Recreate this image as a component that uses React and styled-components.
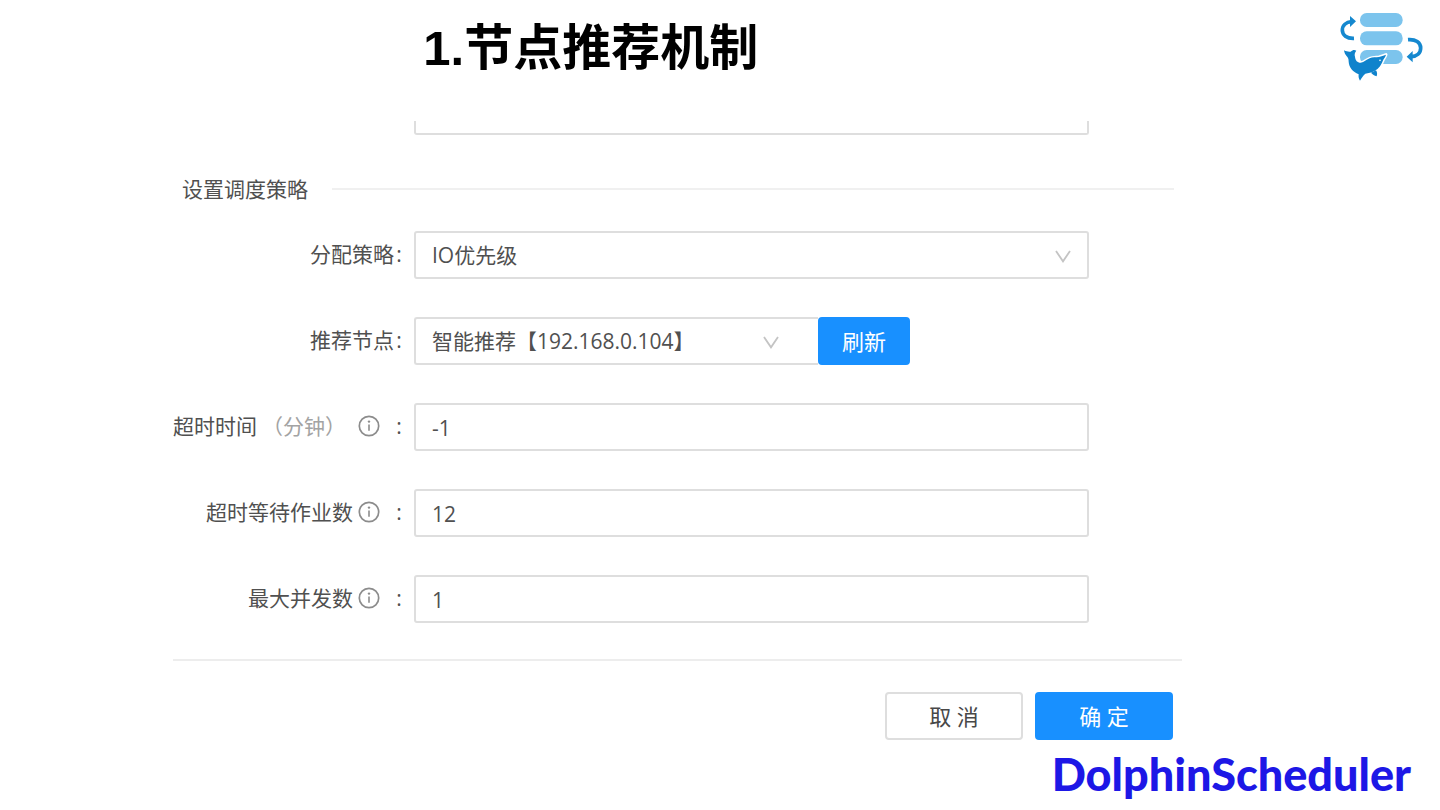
import React from "react";
import styled, { createGlobalStyle } from "styled-components";

const GlobalStyle = createGlobalStyle`
  *, *::before, *::after { box-sizing: border-box; }
  body {
    margin: 0;
    background: #fff;
    color: #505050;
    font-family: "Open Sans", "Noto Sans CJK SC", sans-serif;
    font-size: 21px;
    line-height: 32px;
  }
  button, input, select, textarea { font: inherit; color: inherit; }
`;

const Header = styled.header`
  display: flex;
  align-items: center;
  justify-content: space-between;
  height: 90px;
  padding-left: 29.4%;
`;

const Title = styled.h1`
  margin: 6px 0 0;
  color: #000;
  font-family: "Liberation Sans", "Noto Sans CJK SC", sans-serif;
  font-size: 49px;
  font-weight: 700;
  line-height: 60px;
  white-space: nowrap;
`;

const Logo = styled.svg`
  display: block;
  flex: none;
  width: 120px;
  height: 90px;
`;

const Dialog = styled.form`
  margin: 31px 258px 0 173px;
`;

const Fields = styled.div`
  display: grid;
  row-gap: 38px;
  padding-right: 93px;
`;

const Row = styled.div`
  display: grid;
  grid-template-columns: 241px minmax(0, 1fr);
  align-items: center;
`;

const Label = styled.label`
  display: flex;
  align-items: center;
  justify-content: flex-end;
  gap: 2px;
  padding: 0 12px 2px 0;
  white-space: nowrap;
`;

const Colon = styled.span`
  width: 6px;
  text-align: center;
`;

const Hint = styled.span`
  margin: 0 7px 0 3px;
  color: #a3a3a3;
`;

const Info = styled.svg`
  flex: none;
  width: 22px;
  height: 22px;
  margin: 0 14px 0 3px;
`;

const Input = styled.input`
  width: 100%;
  height: 48px;
  padding: 2px 16px 0;
  border: 2px solid #dedede;
  border-radius: 3px;
  background: #fff;
  outline: none;
`;

const Description = styled.textarea`
  display: block;
  grid-column: 2;
  width: 100%;
  height: 14px;
  padding: 0;
  border: 2px solid #dedede;
  border-top: 0;
  border-radius: 0 0 3px 3px;
  overflow: hidden;
  resize: none;
  outline: none;
`;

const SelectWrap = styled.div`
  position: relative;
  width: ${(p) => p.$width || "100%"};
`;

const Select = styled.select`
  display: block;
  width: 100%;
  height: 48px;
  padding: 0 40px 0 16px;
  border: 2px solid #dedede;
  border-right-width: ${(p) => (p.$joined ? 0 : "2px")};
  border-radius: ${(p) => (p.$joined ? "3px 0 0 3px" : "3px")};
  background: #fff;
  appearance: none;
  outline: none;
`;

const Arrow = styled.svg`
  position: absolute;
  top: 19px;
  right: ${(p) => p.$right};
  width: 16px;
  height: 13px;
  pointer-events: none;
`;

const Group = styled.div`
  display: flex;
`;

const Button = styled.button`
  width: ${(p) => (p.$small ? "92px" : "138px")};
  height: 48px;
  padding: 0;
  border: 2px solid ${(p) => (p.$primary ? "#1890ff" : "#dedede")};
  border-radius: 4px;
  background: ${(p) => (p.$primary ? "#1890ff" : "#fff")};
  color: ${(p) => (p.$primary ? "#fff" : "#484848")};
  font-size: 22px;
`;

const Divider = styled.h2`
  display: flex;
  align-items: center;
  gap: 24px;
  margin: 38px 8px 26px 9px;
  font-size: 21px;
  font-weight: 400;

  &::after {
    content: "";
    flex: 1;
    height: 2px;
    background: #f0f0f0;
  }
`;

const Actions = styled.div`
  display: flex;
  justify-content: flex-end;
  gap: 12px;
  margin-top: 36px;
  padding: 31px 9px 0 0;
  border-top: 2px solid #ededed;
`;

const Brand = styled.footer`
  padding: 8px 29px 0 0;
  color: #1d17e6;
  font-family: Lato, sans-serif;
  font-size: 45px;
  font-weight: 900;
  line-height: 52px;
  text-align: right;
`;

function InfoIcon() {
  return (
    <Info viewBox="0 0 22 22" fill="none" stroke="#8c8c8c" aria-hidden="true">
      <circle cx="11" cy="11" r="9.7" strokeWidth="1.7" />
      <path d="M11 9.6v6.2" strokeWidth="1.6" />
      <circle cx="11" cy="6.6" r="1.2" fill="#8c8c8c" stroke="none" />
    </Info>
  );
}

function ArrowIcon({ right }) {
  return (
    <Arrow $right={right} viewBox="0 0 16 13" fill="none" stroke="#c4c4c4" strokeWidth="1.8" aria-hidden="true">
      <path d="M1 1l7 10.3L15 1" />
    </Arrow>
  );
}

function DolphinLogo() {
  return (
    <Logo viewBox="0 0 360 270" role="img" aria-label="DolphinScheduler">
      <g fill="#7cc4ed">
        <rect x="120" y="39" width="128" height="42" rx="20" />
        <rect x="120" y="94" width="128" height="42" rx="20" />
        <rect x="120" y="150" width="128" height="42" rx="20" />
      </g>
      <g fill="none" stroke="#1588cf" strokeWidth="11">
        <path d="M102 115C80 116 67 105 67 91c0-15 11-25 28-26" />
        <path d="M264 119c23-2 38 9 38 25 0 15-11 25-29 26" />
      </g>
      <path fill="#1588cf" d="M90 48l18 16-18 17zM278 153l-18 17 18 17z" />
      <path
        fill="#0f83cc"
        stroke="#fff"
        strokeWidth="9"
        strokeLinejoin="round"
        paintOrder="stroke"
        d="M72 151c8 4 14 5 20 4 6-5 11-6 17-3-5 6-6 12-4 18 1 11 7 18 17 18 11-1 16-9 27-13 9-4 19-3 28-4 7-2 14-4 21-7-2 7-5 10-8 15-5 14-13 26-25 33-10 6-21 6-29 9-7 6-11 13-16 21-4-6-5-12-4-19-18-8-29-21-30-38 0-9-2-13-7-18-4-4-6-10-7-16z"
      />
      <path fill="#0f83cc" d="M153 218l15-7c4 6 4 12 2 18-7-2-12-6-17-11z" />
      <circle cx="180" cy="181" r="2.5" fill="#fff" />
    </Logo>
  );
}

function NumberRow({ id, label, hint, value }) {
  return (
    <Row>
      <Label htmlFor={id}>
        {label}
        {hint && <Hint>{hint}</Hint>}
        <InfoIcon />
        <Colon>:</Colon>
      </Label>
      <Input id={id} defaultValue={value} />
    </Row>
  );
}

export default function App() {
  return (
    <>
      <GlobalStyle />
      <Header>
        <Title>1.节点推荐机制</Title>
        <DolphinLogo />
      </Header>
      <Dialog onSubmit={(e) => e.preventDefault()}>
        <Fields>
          <Row>
            <Description aria-label="描述" />
          </Row>
        </Fields>
        <Divider>设置调度策略</Divider>
        <Fields>
          <Row>
            <Label htmlFor="strategy">
              分配策略<Colon>:</Colon>
            </Label>
            <SelectWrap>
              <Select id="strategy">
                <option>IO优先级</option>
              </Select>
              <ArrowIcon right="18px" />
            </SelectWrap>
          </Row>
          <Row>
            <Label htmlFor="node">
              推荐节点<Colon>:</Colon>
            </Label>
            <Group>
              <SelectWrap $width="404px">
                <Select id="node" $joined>
                  <option>智能推荐【192.168.0.104】</option>
                </Select>
                <ArrowIcon right="39px" />
              </SelectWrap>
              <Button type="button" $primary $small>
                刷新
              </Button>
            </Group>
          </Row>
          <NumberRow id="timeout" label="超时时间" hint="（分钟）" value="-1" />
          <NumberRow id="waiting" label="超时等待作业数" value="12" />
          <NumberRow id="parallel" label="最大并发数" value="1" />
        </Fields>
        <Actions>
          <Button type="button">取 消</Button>
          <Button type="submit" $primary>
            确 定
          </Button>
        </Actions>
      </Dialog>
      <Brand>DolphinScheduler</Brand>
    </>
  );
}
